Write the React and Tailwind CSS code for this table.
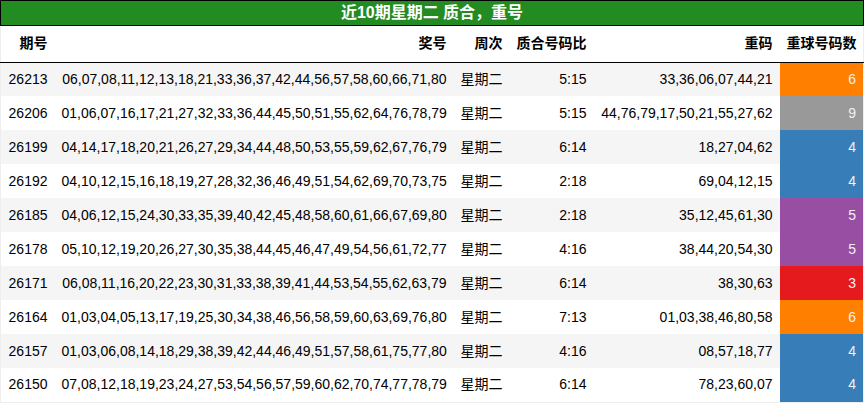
const colors = {
  orange: "bg-[#ff7f00]",
  grey: "bg-[#999999]",
  blue: "bg-[#377eb8]",
  purple: "bg-[#984ea3]",
  red: "bg-[#e41a1c]",
};

const rows = [
  ["26213", "06,07,08,11,12,13,18,21,33,36,37,42,44,56,57,58,60,66,71,80", "5:15", "33,36,06,07,44,21", 6, "orange"],
  ["26206", "01,06,07,16,17,21,27,32,33,36,44,45,50,51,55,62,64,76,78,79", "5:15", "44,76,79,17,50,21,55,27,62", 9, "grey"],
  ["26199", "04,14,17,18,20,21,26,27,29,34,44,48,50,53,55,59,62,67,76,79", "6:14", "18,27,04,62", 4, "blue"],
  ["26192", "04,10,12,15,16,18,19,27,28,32,36,46,49,51,54,62,69,70,73,75", "2:18", "69,04,12,15", 4, "blue"],
  ["26185", "04,06,12,15,24,30,33,35,39,40,42,45,48,58,60,61,66,67,69,80", "2:18", "35,12,45,61,30", 5, "purple"],
  ["26178", "05,10,12,19,20,26,27,30,35,38,44,45,46,47,49,54,56,61,72,77", "4:16", "38,44,20,54,30", 5, "purple"],
  ["26171", "06,08,11,16,20,22,23,30,31,33,38,39,41,44,53,54,55,62,63,79", "6:14", "38,30,63", 3, "red"],
  ["26164", "01,03,04,05,13,17,19,25,30,34,38,46,56,58,59,60,63,69,76,80", "7:13", "01,03,38,46,80,58", 6, "orange"],
  ["26157", "01,03,06,08,14,18,29,38,39,42,44,46,49,51,57,58,61,75,77,80", "4:16", "08,57,18,77", 4, "blue"],
  ["26150", "07,08,12,18,19,23,24,27,53,54,56,57,59,60,62,70,74,77,78,79", "6:14", "78,23,60,07", 4, "blue"],
];

const headers = ["期号", "奖号", "周次", "质合号码比", "重码", "重球号码数"];

export default function App() {
  return (
    <div className="w-[864px] h-[403px] bg-white text-[14px] text-black font-['Liberation_Sans','Noto_Sans_CJK_SC',sans-serif]">
      <div className="w-[864px] h-[26px] bg-[#228b22] border border-black flex items-center justify-center text-white font-bold text-[16px] leading-none">
        近10期星期二 质合，重号
      </div>
      <table className="table-fixed border-collapse w-[864px] border-b border-r border-l border-[#eeeeee]">
        <colgroup>
          <col className="w-[54px]" />
          <col className="w-[399px]" />
          <col className="w-[56px]" />
          <col className="w-[84px]" />
          <col className="w-[186px]" />
          <col className="w-[84px]" />
        </colgroup>
        <thead>
          <tr className="h-[36px] border-b border-black">
            {headers.map((h) => (
              <th key={h} className="px-[7px] text-right font-bold whitespace-nowrap">
                {h}
              </th>
            ))}
          </tr>
        </thead>
        <tbody>
          {rows.map((r, i) => (
            <tr key={r[0]} className={`h-[34px] ${i % 2 === 0 ? "bg-[#f5f5f5]" : "bg-white"}`}>
              <td className="px-[7px] text-right whitespace-nowrap">{r[0]}</td>
              <td className="px-[7px] text-right whitespace-nowrap">{r[1]}</td>
              <td className="px-[7px] text-right whitespace-nowrap">星期二</td>
              <td className="px-[7px] text-right whitespace-nowrap">{r[2]}</td>
              <td className="px-[7px] text-right whitespace-nowrap">{r[3]}</td>
              <td className={`px-[7px] text-right whitespace-nowrap text-[#f1f1f1] ${colors[r[5]]}`}>
                {r[4]}
              </td>
            </tr>
          ))}
        </tbody>
      </table>
    </div>
  );
}
